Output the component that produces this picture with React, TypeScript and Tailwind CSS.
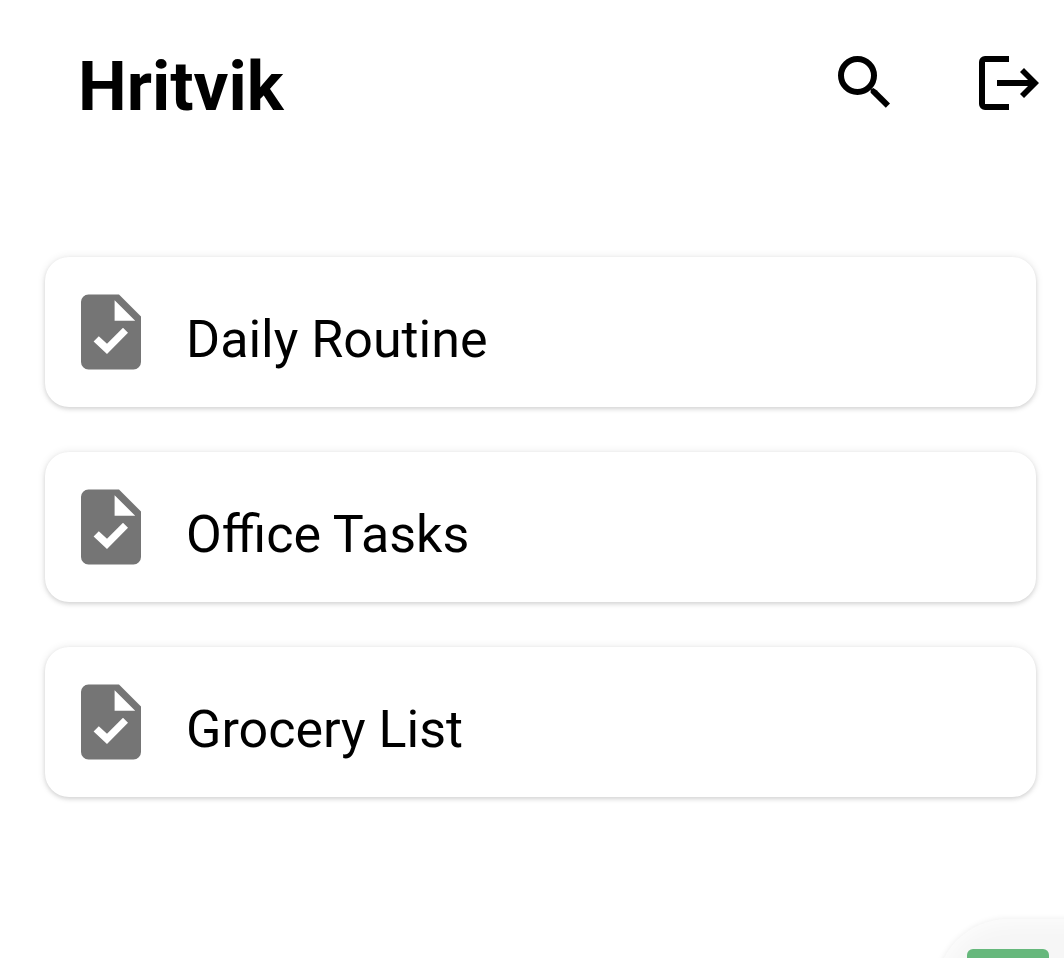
const lists = ["Daily Routine", "Office Tasks", "Grocery List"];

function SearchIcon() {
  return (
    <svg className="h-[52px] w-[52px]" viewBox="0 0 52 52" aria-hidden="true">
      <circle cx="19.5" cy="19.5" r="16.5" fill="none" stroke="#000" strokeWidth="6" />
      <path d="M32.6 33.6 35.3 32 38.7 34.2 52 47.6 47.8 51.8 32.6 36.7Z" />
    </svg>
  );
}

function LogoutIcon() {
  return (
    <svg className="h-[54px] w-[60px]" viewBox="0 0 60 54" aria-hidden="true">
      <path d="M30 0H6a6 6 0 0 0-6 6v42a6 6 0 0 0 6 6h24v-6H6V6h24Z" />
      <path d="M18 24H49L41 16 45 12 60 27 45 42 41 38 49 30H18Z" />
    </svg>
  );
}

function TaskFileIcon() {
  return (
    <svg className="h-[76px] w-[60px] shrink-0" viewBox="0 0 60 76" aria-hidden="true">
      <path
        fill="#757575"
        fillRule="evenodd"
        d="M7.5.4H38L60 22.5V68a7.5 7.5 0 0 1-7.5 7.5h-45A7.5 7.5 0 0 1 0 68V8A7.5 7.5 0 0 1 7.5.4ZM33.6 6.2V26.8H54.2ZM12.6 47.6 26 60 47 38.8 42 33.8 26 49.8 17.8 42.3Z"
      />
    </svg>
  );
}

export default function App() {
  return (
    <div className="min-h-screen overflow-x-clip bg-white font-[Roboto,sans-serif] text-black">
      <header className="flex items-start justify-between pt-10 pr-[25px] pl-[78px]">
        <h1 className="text-[69px] leading-[94px] font-bold">Hritvik</h1>
        <nav className="flex items-start gap-[89px] pt-4">
          <button type="button" aria-label="Search">
            <SearchIcon />
          </button>
          <button type="button" aria-label="Log out">
            <LogoutIcon />
          </button>
        </nav>
      </header>

      <main className="pt-[123px] pr-7 pl-[45px]">
        <ul className="flex flex-col gap-[45px]">
          {lists.map((name) => (
            <li key={name}>
              <button
                type="button"
                className="flex h-[150px] w-full items-center gap-[45px] rounded-3xl bg-white px-9 text-left shadow-[0_2px_4px_rgba(0,0,0,0.13),0_0_8px_rgba(0,0,0,0.09)]"
              >
                <TaskFileIcon />
                <span className="pt-4 text-[52px] leading-[60px]">{name}</span>
              </button>
            </li>
          ))}
        </ul>
      </main>

      <button
        type="button"
        aria-label="Add list"
        className="fixed -right-[172px] -bottom-[105px] flex h-36 w-[300px] items-start rounded-full bg-[#f6f6f6] pt-[30px] pl-[31px] shadow-[0_0_6px_rgba(0,0,0,0.08),inset_0_0_24px_#ffffff]"
      >
        <span className="h-[82px] w-[82px] rounded-md bg-[#66b87c]" />
      </button>
    </div>
  );
}
